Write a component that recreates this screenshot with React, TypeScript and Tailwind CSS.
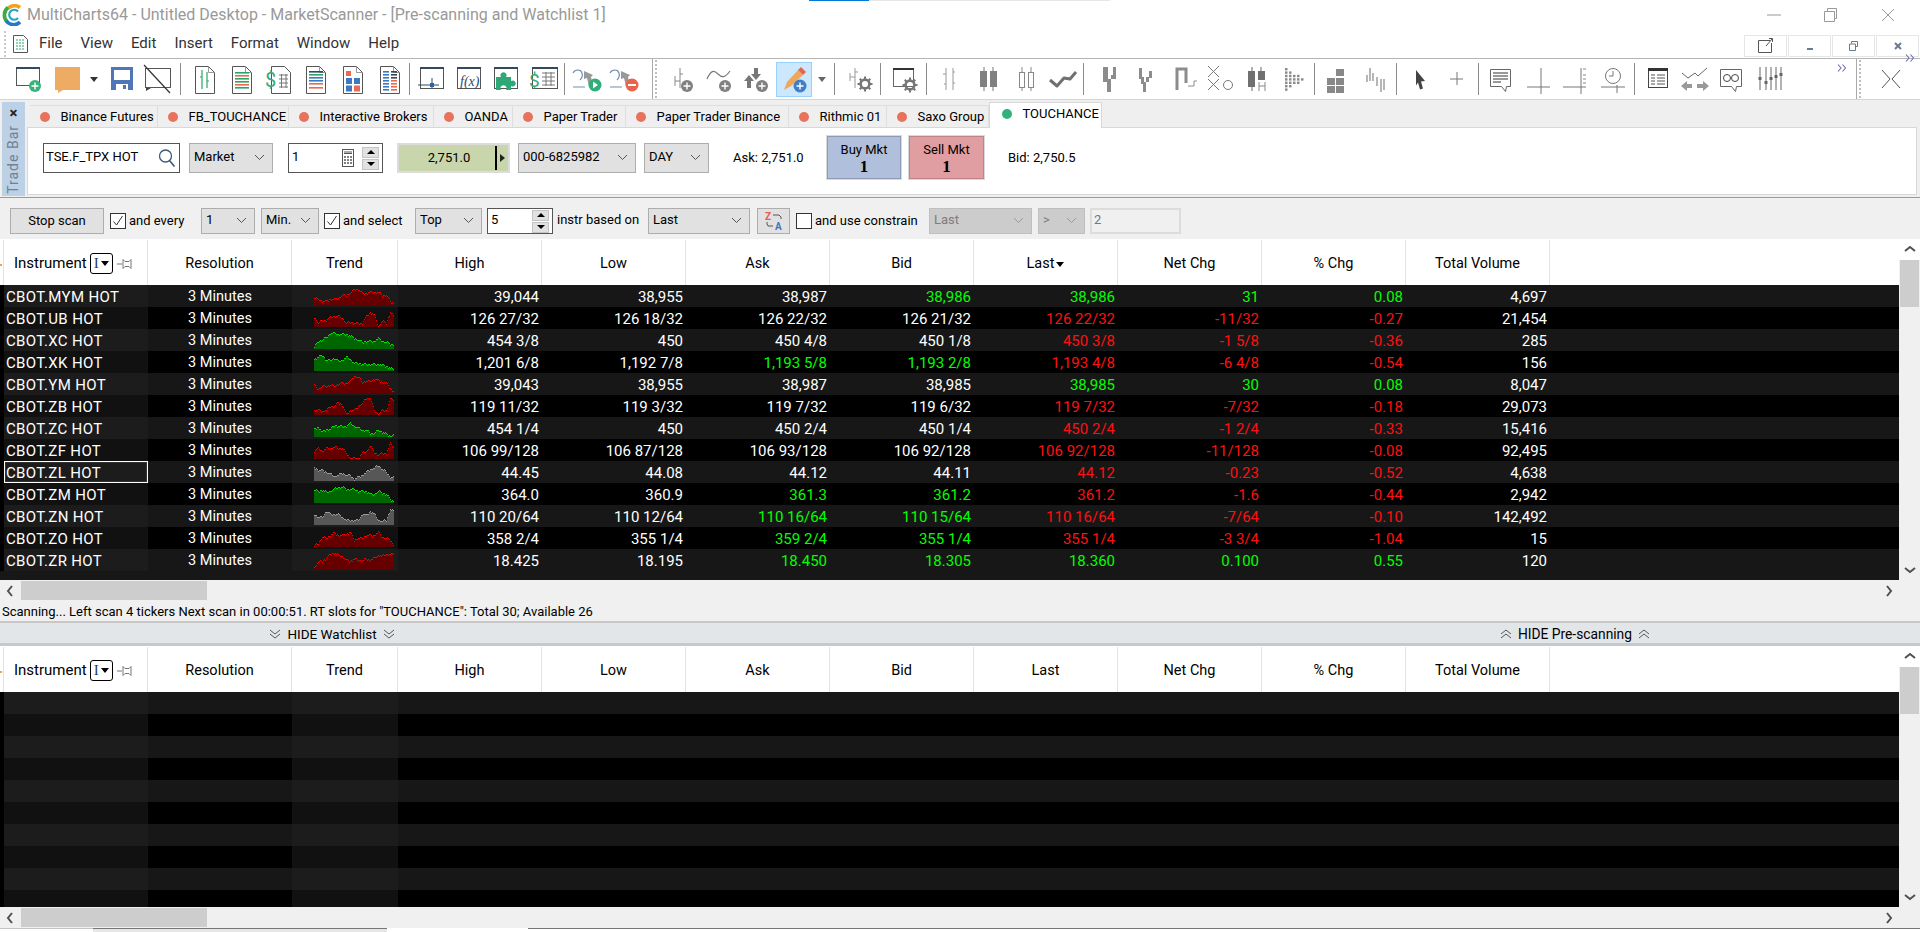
import React from 'react';

type Tone = 'w' | 'g' | 'r';
type Cell = [string, Tone];

const W: Tone = 'w';
const G: Tone = 'g';
const R: Tone = 'r';

const toneClass: Record<Tone, string> = {
  w: 'text-white',
  g: 'text-[#00ff00]',
  r: 'text-[#ff1010]',
};

// name, high, low, ask, bid, last, net, pct, volume, spark colour, spark heights
const ROWS: { name: string; high: string; low: string; cells: Cell[]; vol: string; spark: 'red' | 'green' | 'gray'; h: number[] }[] = [
  { name: 'CBOT.MYM HOT', high: '39,044', low: '38,955', cells: [['38,987', W], ['38,986', G], ['38,986', G], ['31', G], ['0.08', G]], vol: '4,697', spark: 'red', h: [7, 6, 4, 4, 6, 6, 7, 10, 10, 12, 16, 16, 12, 12, 13, 13, 13, 10, 10, 4, 1] },
  { name: 'CBOT.UB HOT', high: '126 27/32', low: '126 18/32', cells: [['126 22/32', W], ['126 21/32', W], ['126 22/32', R], ['-11/32', R], ['-0.27', R]], vol: '21,454', spark: 'red', h: [10, 4, 7, 7, 10, 11, 11, 9, 4, 5, 4, 4, 4, 11, 15, 12, 1, 6, 4, 15, 10] },
  { name: 'CBOT.XC HOT', high: '454 3/8', low: '450', cells: [['450 4/8', W], ['450 1/8', W], ['450 3/8', R], ['-1 5/8', R], ['-0.36', R]], vol: '285', spark: 'green', h: [2, 8, 9, 12, 16, 16, 15, 15, 15, 13, 11, 9, 7, 8, 8, 8, 11, 8, 7, 5, 5] },
  { name: 'CBOT.XK HOT', high: '1,201 6/8', low: '1,192 7/8', cells: [['1,193 5/8', G], ['1,193 2/8', G], ['1,193 4/8', R], ['-6 4/8', R], ['-0.54', R]], vol: '156', spark: 'green', h: [12, 14, 16, 11, 11, 13, 10, 11, 14, 12, 8, 8, 7, 7, 7, 7, 7, 6, 5, 3, 1] },
  { name: 'CBOT.YM HOT', high: '39,043', low: '38,955', cells: [['38,987', W], ['38,985', W], ['38,985', G], ['30', G], ['0.08', G]], vol: '8,047', spark: 'red', h: [8, 4, 7, 7, 8, 7, 9, 10, 10, 12, 17, 16, 11, 12, 12, 14, 13, 11, 10, 5, 1] },
  { name: 'CBOT.ZB HOT', high: '119 11/32', low: '119 3/32', cells: [['119 7/32', W], ['119 6/32', W], ['119 7/32', R], ['-7/32', R], ['-0.18', R]], vol: '29,073', spark: 'red', h: [5, 5, 4, 5, 9, 9, 13, 10, 1, 5, 5, 9, 12, 17, 17, 5, 1, 5, 5, 17, 15] },
  { name: 'CBOT.ZC HOT', high: '454 1/4', low: '450', cells: [['450 2/4', W], ['450 1/4', W], ['450 2/4', R], ['-1 2/4', R], ['-0.33', R]], vol: '15,416', spark: 'green', h: [8, 10, 5, 8, 8, 12, 11, 11, 11, 14, 11, 9, 7, 7, 4, 4, 7, 5, 3, 1, 3] },
  { name: 'CBOT.ZF HOT', high: '106 99/128', low: '106 87/128', cells: [['106 93/128', W], ['106 92/128', W], ['106 92/128', R], ['-11/128', R], ['-0.08', R]], vol: '92,495', spark: 'red', h: [8, 11, 8, 11, 11, 12, 11, 11, 6, 1, 1, 1, 6, 8, 13, 7, 4, 6, 6, 16, 11] },
  { name: 'CBOT.ZL HOT', high: '44.45', low: '44.08', cells: [['44.12', W], ['44.11', W], ['44.12', R], ['-0.23', R], ['-0.52', R]], vol: '4,638', spark: 'gray', h: [14, 11, 11, 9, 7, 5, 6, 8, 6, 6, 2, 4, 6, 9, 12, 13, 16, 12, 9, 4, 4] },
  { name: 'CBOT.ZM HOT', high: '364.0', low: '360.9', cells: [['361.3', G], ['361.2', G], ['361.2', R], ['-1.6', R], ['-0.44', R]], vol: '2,942', spark: 'green', h: [13, 12, 13, 11, 12, 14, 16, 16, 14, 14, 14, 12, 12, 12, 9, 9, 12, 10, 9, 4, 1] },
  { name: 'CBOT.ZN HOT', high: '110 20/64', low: '110 12/64', cells: [['110 16/64', G], ['110 15/64', G], ['110 16/64', R], ['-7/64', R], ['-0.10', R]], vol: '142,492', spark: 'gray', h: [11, 8, 8, 14, 11, 11, 11, 8, 5, 5, 5, 5, 11, 10, 14, 11, 5, 4, 5, 16, 13] },
  { name: 'CBOT.ZO HOT', high: '358 2/4', low: '355 1/4', cells: [['359 2/4', G], ['355 1/4', G], ['355 1/4', R], ['-3 3/4', R], ['-1.04', R]], vol: '15', spark: 'red', h: [1, 4, 10, 9, 12, 14, 12, 12, 13, 15, 7, 9, 9, 12, 12, 12, 15, 10, 9, 7, 1] },
  { name: 'CBOT.ZR HOT', high: '18.425', low: '18.195', cells: [['18.450', G], ['18.305', G], ['18.360', G], ['0.100', G], ['0.55', G]], vol: '120', spark: 'red', h: [2, 7, 8, 11, 15, 16, 14, 13, 9, 8, 10, 9, 9, 10, 9, 11, 14, 13, 15, 15, 15] },
];

const sparkColors = {
  red: { fill: '#660000', top: '#f00000' },
  green: { fill: '#006600', top: '#00e000' },
  gray: { fill: '#575757', top: '#9a9a9a' },
};

function Spark({ kind, h, seed }: { kind: 'red' | 'green' | 'gray'; h: number[]; seed: number }) {
  const c = sparkColors[kind];
  const fills: React.ReactNode[] = [];
  for (let x = 0; x < 80; x++) {
    const a = x / 4;
    const i = Math.min(Math.floor(a), 19);
    const base = h[i] + (h[i + 1] - h[i]) * (a - i);
    const wob = [0, 1, 0, 0, -1, 0, 1, -1, 0][(x * 5 + seed * 7) % 9];
    const v = Math.max(1, Math.min(17, Math.round(base + wob)));
    fills.push(<rect key={x} x={x} y={18 - v} width={1} height={v} fill={c.fill} />);
    fills.push(<rect key={'t' + x} x={x} y={18 - v} width={1} height={1} fill={c.top} />);
  }
  return (
    <svg width={80} height={18} viewBox="0 0 80 18" shapeRendering="crispEdges" className="block">
      {fills}
    </svg>
  );
}

function Badge({ cx, cy, c, r = 6 }: { cx: number; cy: number; c: string; r?: number }) {
  return (
    <g>
      <circle cx={cx} cy={cy} r={r} fill={c} />
      <path d={`M${cx - 3.5} ${cy}h7M${cx} ${cy - 3.5}v7`} stroke="#fff" strokeWidth={1.4} />
    </g>
  );
}

function Gear({ cx, cy, c = '#777' }: { cx: number; cy: number; c?: string }) {
  return (
    <g>
      <circle cx={cx} cy={cy} r={4.4} fill="none" stroke={c} strokeWidth={2.6} />
      <path d={`M${cx} ${cy - 7.5}v3M${cx} ${cy + 4.5}v3M${cx - 7.5} ${cy}h3M${cx + 4.5} ${cy}h3M${cx - 5.3} ${cy - 5.3}l2 2M${cx + 3.3} ${cy + 3.3}l2 2M${cx + 5.3} ${cy - 5.3}l-2 2M${cx - 3.3} ${cy + 3.3}l-2 2`} stroke={c} strokeWidth={2} />
    </g>
  );
}

function Ico({ children }: { children: React.ReactNode }) {
  return (
    <svg width={34} height={32} viewBox="0 0 34 32" fill="none">
      {children}
    </svg>
  );
}

function Doc({ children }: { children: React.ReactNode }) {
  return (
    <Ico>
      <path d="M7.5 3.5h13l6 6v21h-19z" fill="#fff" stroke="#555" />
      <path d="M20.5 3.5v6h6" stroke="#999" />
      {children}
    </Ico>
  );
}

function Win({ children }: { children: React.ReactNode }) {
  return (
    <Ico>
      <rect x={5.5} y={4.5} width={23} height={21} fill="#fff" stroke="#555" />
      <rect x={5} y={4} width={24} height={2} fill="#34495e" />
      {children}
    </Ico>
  );
}

const bars = (rows: [number, string, number][]) =>
  rows.map(([y, c, w], i) => <rect key={i} x={10} y={y} width={w} height={1.6} fill={c} />);

const TOOL_ICONS: Record<string, React.ReactNode> = {
  newWin: (
    <Ico>
      <rect x={5.5} y={4.5} width={23} height={18} fill="#fff" stroke="#555" />
      <rect x={5} y={4} width={24} height={2} fill="#34495e" />
      <Badge cx={24} cy={23} c="#38b27a" />
    </Ico>
  ),
  note: (
    <Ico>
      <path d="M5 4h25v23H13l-5 3v-3H5z" fill="#edab63" />
    </Ico>
  ),
  save: (
    <Ico>
      <rect x={6} y={4} width={22} height={23} fill="#4f76b6" />
      <rect x={9} y={7} width={16} height={10} fill="#fff" />
      <rect x={11} y={21} width={12} height={6} fill="#fff" />
      <rect x={18} y={22} width={3} height={4} fill="#4f76b6" />
    </Ico>
  ),
  noChart: (
    <Ico>
      <rect x={4.5} y={5.5} width={25} height={19} fill="#fff" stroke="#555" />
      <path d="M5 25h5l-5 3z" fill="#444" />
      <path d="M3 2l26 28" stroke="#333" strokeWidth={1.2} />
    </Ico>
  ),
  docChart: (
    <Doc>
      <path d="M14 7v19M19 9v16M12 14h2M19 18h2" stroke="#2aa56a" strokeWidth={1.2} />
    </Doc>
  ),
  docBars: (
    <Doc>
      {[9, 12, 15, 18, 21, 24].map((y, i) => (
        <rect key={y} x={10} y={y} width={14} height={1.6} fill={i % 3 === 1 ? '#e86a50' : '#2aa56a'} />
      ))}
    </Doc>
  ),
  docDollar: (
    <Ico>
      <path d="M9.5 3.5h13l6 6v21h-19z" fill="#fff" stroke="#555" />
      <text x={3} y={24} fontSize={20} fontFamily="Roboto, sans-serif" fill="#35ab7a">$</text>
      <path d="M17 12h9M17 16h9M17 20h9M17 24h9M19.5 11v14M24 11v14" stroke="#777" />
    </Ico>
  ),
  docLines: (
    <Doc>
      {bars([[8, '#34495e', 14], [11, '#2aa56a', 14], [14, '#3b79c4', 14], [17, '#3b79c4', 14], [20, '#e86a50', 14], [24, '#e86a50', 14]])}
    </Doc>
  ),
  docSquares: (
    <Doc>
      <rect x={10} y={8} width={5} height={5} fill="#e86a50" />
      <rect x={10} y={15} width={6} height={6} fill="#3b79c4" />
      <rect x={18} y={15} width={6} height={6} fill="#3b79c4" />
      <rect x={10} y={22.5} width={6} height={6} fill="#3b79c4" />
      <rect x={18} y={22.5} width={6} height={6} fill="#e86a50" />
    </Doc>
  ),
  docCols: (
    <Doc>
      {[8, 11, 14, 17, 20, 23, 26].map((y) => (
        <g key={y}>
          <rect x={10} y={y} width={6} height={1.6} fill="#3b79c4" />
          <rect x={18} y={y} width={6} height={1.6} fill={y > 14 ? '#e86a50' : '#34495e'} />
        </g>
      ))}
    </Doc>
  ),
  winCross: (
    <Win>
      <path d="M3 22h21M17 15v11" stroke="#34495e" />
      <rect x={15} y={20} width={4} height={4} fill="#2b62a8" />
    </Win>
  ),
  winFx: (
    <Win>
      <text x={8} y={23} fontSize={14} fontStyle="italic" fontFamily="'Liberation Serif', serif" fill="#2b4a6e">f(x)</text>
    </Win>
  ),
  winPuzzle: (
    <Ico>
      <rect x={5.5} y={4.5} width={23} height={21} fill="#fff" stroke="#555" />
      <rect x={5} y={4} width={24} height={2} fill="#34495e" />
      <path d="M7 14h5a3 3 0 1 1 5 0h5v4a3 3 0 1 1 0 5v4h-5a3 3 0 1 0-5 0H7z" fill="#2fa877" />
    </Ico>
  ),
  winDollar: (
    <Ico>
      <rect x={6.5} y={4.5} width={25} height={21} fill="#fff" stroke="#555" />
      <rect x={6} y={4} width={26} height={2} fill="#34495e" />
      <text x={3} y={24} fontSize={19} fontFamily="Roboto, sans-serif" fill="#35ab7a">$</text>
      <path d="M16 10h13M16 14h13M16 18h13M16 22h13M20 9v14M25 9v14" stroke="#777" />
    </Ico>
  ),
  runGo: (
    <Ico>
      <path d="M3 10c2-4 8-4 9 0 1 3-1 6-2 7M3 24h12" stroke="#6f8fb0" strokeWidth={1.2} />
      <path d="M14 8l9 4-2 2 2 8-4 1-2-8-3 1z" fill="#999" />
      <circle cx={25} cy={22} r={6.5} fill="#2fae77" />
      <path d="M23 18.5v7l5-3.5z" fill="#fff" />
    </Ico>
  ),
  runStop: (
    <Ico>
      <path d="M3 10c2-4 8-4 9 0 1 3-1 6-2 7M3 24h12" stroke="#6f8fb0" strokeWidth={1.2} />
      <path d="M14 8l9 4-2 2 2 8-4 1-2-8-3 1z" fill="#999" />
      <circle cx={25} cy={22} r={6.5} fill="#e8654c" />
      <path d="M21 22h8" stroke="#fff" strokeWidth={2} />
    </Ico>
  ),
  addBar: (
    <Ico>
      <path d="M13 5v20M8 13v10M8 18h5M13 11h3" stroke="#888" />
      <Badge cx={20} cy={23} c="#808080" />
    </Ico>
  ),
  addLine: (
    <Ico>
      <path d="M3 16c4-9 7-9 11-5s7 4 12-3" stroke="#777" strokeWidth={1.2} />
      <Badge cx={21} cy={23} c="#808080" />
    </Ico>
  ),
  addArrows: (
    <Ico>
      <path d="M14 5h4v6h3l-5 6-5-6h3zM9 12l5 6h-3v7H7v-7H4z" fill="#777" />
      <Badge cx={22} cy={23} c="#808080" />
    </Ico>
  ),
  addPencil: (
    <Ico>
      <path d="M7 27l3-8 11-12 5 5-12 11z" fill="#eca95b" />
      <path d="M21 7l3-3 5 5-3 3z" fill="#e8654c" />
      <Badge cx={23} cy={23} c="#3f7fc6" r={6.5} />
    </Ico>
  ),
  barsGear: (
    <Ico>
      <path d="M10 5v20M5 10v8M5 14h5M10 9h3" stroke="#999" />
      <Gear cx={20} cy={21} />
    </Ico>
  ),
  winGear: (
    <Ico>
      <rect x={5.5} y={5.5} width={20} height={18} fill="#fff" stroke="#666" />
      <rect x={5} y={5} width={21} height={2} fill="#333" />
      <Gear cx={22} cy={22} />
    </Ico>
  ),
  ohlc: (
    <Ico>
      <path d="M13 5v22M20 5v22M10 11h3M13 21h-2M20 9h2M20 20h2" stroke="#999" />
    </Ico>
  ),
  candle: (
    <Ico>
      <path d="M12 4v24M21 4v24" stroke="#777" />
      <rect x={8} y={8} width={7} height={16} fill="#808080" />
      <rect x={18} y={8} width={7} height={16} fill="#808080" />
    </Ico>
  ),
  hollow: (
    <Ico>
      <path d="M12 4v24M21 4v24" stroke="#888" />
      <rect x={9.5} y={9.5} width={5} height={15} fill="#fff" stroke="#888" />
      <rect x={18.5} y={9.5} width={5} height={15} fill="#fff" stroke="#888" />
    </Ico>
  ),
  lineChk: (
    <Ico>
      <path d="M4 17l7 6 7-8 6 1 6-7" stroke="#707070" strokeWidth={3} strokeLinejoin="round" />
    </Ico>
  ),
  kagi: (
    <Ico>
      <path d="M11 4h5v12h3v13h-4V19h-4zM21 4h3v12h-5v-4h2z" fill="#8c8c8c" />
    </Ico>
  ),
  kagiThin: (
    <Ico>
      <path d="M11 5h3v9h2v5h2v10h-3V21h-2v-5h-2zM21 8h3v7h-3v4h-3v-5h3z" fill="#8c8c8c" />
    </Ico>
  ),
  renko: (
    <Ico>
      <path d="M10 27V6h9v14" stroke="#8c8c8c" strokeWidth={3} />
      <path d="M21 23h6v-5h3" stroke="#8c8c8c" />
    </Ico>
  ),
  pf: (
    <Ico>
      <path d="M5 3l11 11M16 3L5 14M5 16l11 11M16 16L5 27" stroke="#777" />
      <circle cx={25} cy={22} r={4.5} stroke="#777" />
    </Ico>
  ),
  candleH: (
    <Ico>
      <path d="M12 4v24M21 4v8" stroke="#666" />
      <rect x={8} y={8} width={7} height={16} fill="#707070" />
      <rect x={18} y={8} width={7} height={9} fill="#707070" />
      <path d="M19 19v9M25 19v9M19 23h6" stroke="#888" />
    </Ico>
  ),
  dots: (
    <Ico>
      {[0, 1, 2, 3, 4].map((c) =>
        [0, 1, 2, 3, 4, 5, 6].map((r) =>
          Math.abs(r - 3) <= 3 - c / 1.6 ? <rect key={`${c}${r}`} x={8 + c * 4} y={5 + r * 3.4} width={2.5} height={2.4} fill="#8a8a8a" /> : null,
        ),
      )}
    </Ico>
  ),
  blocks: (
    <Ico>
      <rect x={16} y={6} width={8} height={7} fill="#888" />
      <rect x={7} y={15} width={8} height={7} fill="#888" />
      <rect x={16} y={15} width={8} height={7} fill="#888" />
      <rect x={7} y={23} width={8} height={7} fill="#888" />
      <rect x={16} y={23} width={8} height={7} fill="#888" />
    </Ico>
  ),
  steps: (
    <Ico>
      <path d="M9 12v7M12 5v13M15 10v8M19 14v9M23 16v13M26 16v11" stroke="#999" strokeWidth={1.4} />
    </Ico>
  ),
  arrow: (
    <Ico>
      <path d="M13 7l9 11-4 .5 2 7-3 1-2-7-2 3z" fill="#444" />
    </Ico>
  ),
  cross: (
    <Ico>
      <path d="M17 9v13M10 16h13" stroke="#777" />
    </Ico>
  ),
  talk: (
    <Ico>
      <path d="M6.5 6.5h20v17h-4l-1 5-4-5h-11z" fill="#fff" stroke="#666" />
      <path d="M9 10h15M9 13h15M9 16h15M9 19h8" stroke="#333" />
    </Ico>
  ),
  hLine: (
    <Ico>
      <path d="M5 24h23M19 5v26" stroke="#777" />
    </Ico>
  ),
  hScale: (
    <Ico>
      <path d="M5 24h23M23 5v26" stroke="#777" />
      <path d="M25 6h3M25 12h3M25 16h3M25 20h3" stroke="#888" />
    </Ico>
  ),
  clock: (
    <Ico>
      <circle cx={17} cy={13} r={7.5} stroke="#777" />
      <path d="M17 8v5h-4M5 24h24M21 22v8" stroke="#777" />
    </Ico>
  ),
  table: (
    <Ico>
      <rect x={7.5} y={6.5} width={19} height={18} fill="#fff" stroke="#444" />
      <rect x={7} y={5} width={20} height={3} fill="#333" />
      <path d="M10 12h4M16 12h8M10 15h4M16 15h8M10 18h4M16 18h8M10 21h4M16 21h8" stroke="#555" />
    </Ico>
  ),
  swap: (
    <Ico>
      <path d="M4 10l6 5 7-5 3 3 9-8" stroke="#666" />
      <path d="M3 23l6-5v3h5v4H9v3zM31 23l-6-5v3h-6v4h6v3z" fill="#999" />
    </Ico>
  ),
  glasses: (
    <Ico>
      <path d="M6.5 6.5h21v17h-5l-1 5-4-5h-11z" fill="#fff" stroke="#666" />
      <circle cx={13} cy={15} r={3.5} stroke="#444" />
      <circle cx={21} cy={15} r={3.5} stroke="#444" />
    </Ico>
  ),
  sliders: (
    <Ico>
      {[7, 13, 18, 23, 28].map((x, i) => (
        <g key={x}>
          <path d={`M${x} 4v23`} stroke="#666" />
          <rect x={x - 1.5} y={[14, 18, 14, 12, 10][i]} width={3} height={3} fill="#666" />
        </g>
      ))}
    </Ico>
  ),
};

function Tool({ icon, className = '' }: { icon: string; className?: string }) {
  return <div className={`w-[36px] h-[41px] flex items-center justify-center shrink-0 ${className}`}>{TOOL_ICONS[icon]}</div>;
}

function Sep({ className = '' }: { className?: string }) {
  return <div className={`w-px h-[32px] bg-[#8c8c8c] shrink-0 ${className}`} />;
}

function DropTri({ className = '' }: { className?: string }) {
  return <div className={`w-0 h-0 border-l-[4.5px] border-r-[4.5px] border-t-[5px] border-l-transparent border-r-transparent border-t-[#333] ${className}`} />;
}

function Grip() {
  return <div className="h-[38px] border-l-2 border-dotted border-[#bdbdbd] shrink-0" />;
}

function Chev({ dir, className = '' }: { dir: 'up' | 'down' | 'left' | 'right'; className?: string }) {
  const d = { up: 'M2 8l5-4 5 4', down: 'M2 5l5 4 5-4', left: 'M8 2L4 7l4 5', right: 'M5 2l4 5-4 5' }[dir];
  return (
    <svg width={14} height={14} viewBox="0 0 14 14" fill="none" className={className}>
      <path d={d} stroke="#505050" strokeWidth={2} />
    </svg>
  );
}

function SmallV({ stroke = '#555' }: { stroke?: string }) {
  return (
    <svg width={11} height={7} viewBox="0 0 11 7" fill="none">
      <path d="M1 1l4.5 4.5L10 1" stroke={stroke} />
    </svg>
  );
}

function DblChev({ up }: { up?: boolean }) {
  return (
    <svg width={12} height={10} viewBox="0 0 12 10" fill="none" className={up ? '' : 'rotate-180'}>
      <path d="M1 5l5-4 5 4M1 9l5-4 5 4" stroke="#555" />
    </svg>
  );
}

function More({ className = '' }: { className?: string }) {
  return (
    <svg width={10} height={8} viewBox="0 0 10 8" fill="none" className={className}>
      <path d="M1 .5L4 4 1 7.500M5.500 .5l3 3.500-3 3.500" stroke="#6d6db0" strokeWidth={1.1} />
    </svg>
  );
}

function Sel({ text, className, disabled }: { text: string; className: string; disabled?: boolean }) {
  return (
    <div className={`flex items-center justify-between pl-[4px] pr-[7px] pb-[2px] border shrink-0 ${disabled ? 'bg-[#cccccc] border-[#bfbfbf] text-[#7d7d7d]' : 'bg-[#e1e1e1] border-[#adadad] text-black'} ${className}`}>
      <span>{text}</span>
      <SmallV stroke={disabled ? '#999' : '#555'} />
    </div>
  );
}

function Spinner({ text, className, calc }: { text: string; className: string; calc?: boolean }) {
  return (
    <div className={`flex items-center bg-white border border-[#555] pl-[3px] pr-[3px] shrink-0 ${className}`}>
      <span className="flex-1 pb-[2px]">{text}</span>
      {calc && (
        <svg width={12} height={18} viewBox="0 0 12 18" fill="none" className="mr-[8px]">
          <rect x={0.5} y={0.5} width={11} height={17} stroke="#555" />
          <path d="M2 3h8M2 4.5h8" stroke="#555" />
          <path d="M2 8h2M5 8h2M8 8h2M2 11h2M5 11h2M8 11h2M2 14h2M5 14h2M8 14h2" stroke="#555" strokeWidth={1.5} />
        </svg>
      )}
      <div className="flex flex-col gap-[1px] w-[17px] shrink-0">
        <div className="h-[11px] bg-[#e1e1e1] border border-[#c4c4c4] flex items-center justify-center">
          <div className="w-0 h-0 border-l-[4px] border-r-[4px] border-b-[4px] border-l-transparent border-r-transparent border-b-black" />
        </div>
        <div className="h-[11px] bg-[#e1e1e1] border border-[#c4c4c4] flex items-center justify-center">
          <div className="w-0 h-0 border-l-[4px] border-r-[4px] border-t-[4px] border-l-transparent border-r-transparent border-t-black" />
        </div>
      </div>
    </div>
  );
}

function Check({ on }: { on?: boolean }) {
  return (
    <div className="w-[16px] h-[16px] bg-white border border-[#333] flex items-center justify-center shrink-0">
      {on && (
        <svg width={12} height={12} viewBox="0 0 12 12" fill="none">
          <path d="M1.5 6.5l3 3.5 6-9" stroke="#333" />
        </svg>
      )}
    </div>
  );
}

const TABS = [
  { name: 'Binance Futures', w: 'w-[128px]' },
  { name: 'FB_TOUCHANCE', w: 'w-[131px]' },
  { name: 'Interactive Brokers', w: 'w-[145px]' },
  { name: 'OANDA', w: 'w-[79px]' },
  { name: 'Paper Trader', w: 'w-[113px]' },
  { name: 'Paper Trader Binance', w: 'w-[163px]' },
  { name: 'Rithmic 01', w: 'w-[98px]' },
  { name: 'Saxo Group', w: 'w-[102px]' },
];

function HeaderRow({ sorted }: { sorted?: boolean }) {
  const cols = ['Resolution', 'Trend', 'High', 'Low', 'Ask', 'Bid', 'Last', 'Net Chg', '% Chg', 'Total Volume'];
  return (
    <div className="flex h-[46px] bg-white text-black text-[14.5px] shrink-0">
      <div className="w-[4px] border-r border-[#e3e3e3] mt-[1px] flex items-center">
        <div className="w-[2px] h-[2px] bg-[#f0a050] mt-[5px]" />
      </div>
      <div className="w-[144px] border-r border-[#e3e3e3] flex items-center pl-[10px] mt-[1px] pt-[2px] text-[15px]">
        <span>Instrument</span>
        <span className="ml-[3px] w-[23px] h-[21px] border border-black rounded-[3px] flex items-center justify-center gap-[2px] text-[#1a3a6a] font-['Liberation_Serif',serif]">
          I<DropTri className="border-t-black" />
        </span>
        <svg width={18} height={12} viewBox="0 0 18 12" fill="none" className="ml-[4px]">
          <path d="M0 6h5M6 1.5l2 2h4l2-2v9l-2-2H8l-2 2z" stroke="#777" />
        </svg>
      </div>
      {cols.map((c) => (
        <div key={c} className={`${c === 'Trend' ? 'w-[106px]' : 'w-[144px]'} border-r border-[#e3e3e3] flex items-center justify-center gap-[2px] mt-[1px] pt-[2px]`}>
          {c}
          {sorted && c === 'Last' && <DropTri className="border-t-black mt-[2px]" />}
        </div>
      ))}
    </div>
  );
}

function Gutter() {
  return <div className="w-[4px] shrink-0 bg-black" />;
}

function DataRow({ i }: { i: number }) {
  const r = ROWS[i];
  const odd = i % 2 === 1;
  const hi = odd ? 'bg-[#111111]' : 'bg-[#1c1c1c]';
  const selected = r.name === 'CBOT.ZL HOT';
  return (
    <div className={`flex h-[22px] text-[15px] leading-[24px] text-white shrink-0 ${odd ? 'bg-black' : 'bg-[#171717]'}`}>
      <Gutter />
      <div className={`w-[144px] h-[22px] pl-[2px] tracking-[0.35px] ${hi} ${selected ? 'shadow-[inset_0_0_0_1px_#ffffff,inset_0_0_0_2px_#333333]' : ''}`}>{r.name}</div>
      <div className="w-[144px] text-center text-[14.5px]">3 Minutes</div>
      <div className={`w-[106px] h-[22px] pl-[22px] pt-[2px] ${hi}`}>
        <Spark kind={r.spark} h={r.h} seed={i} />
      </div>
      <div className="w-[144px] text-right pr-[3px]">{r.high}</div>
      <div className="w-[144px] text-right pr-[3px]">{r.low}</div>
      {r.cells.map(([t, tone], k) => (
        <div key={k} className={`w-[144px] text-right pr-[3px] ${toneClass[tone]}`}>{t}</div>
      ))}
      <div className="w-[144px] text-right pr-[3px]">{r.vol}</div>
    </div>
  );
}

function EmptyRow({ i }: { i: number }) {
  const odd = i % 2 === 1;
  return (
    <div className={`flex h-[22px] shrink-0 ${odd ? 'bg-black' : 'bg-[#171717]'}`}>
      <Gutter />
      <div className={`w-[144px] ${odd ? 'bg-[#111111]' : 'bg-[#1c1c1c]'}`} />
      <div className="w-[144px]" />
      <div className={`w-[106px] ${odd ? 'bg-[#111111]' : 'bg-[#1c1c1c]'}`} />
    </div>
  );
}

function VScroll() {
  return (
    <div className="w-[21px] bg-[#f0f0f0] flex flex-col items-center shrink-0">
      <div className="h-[21px] w-full bg-white flex items-center justify-center">
        <Chev dir="up" />
      </div>
      <div className="w-[19px] h-[47px] bg-[#cdcdcd]" />
      <div className="flex-1" />
      <div className="h-[21px] flex items-center justify-center">
        <Chev dir="down" />
      </div>
    </div>
  );
}

function HScroll() {
  return (
    <div className="h-[21px] bg-[#f0f0f0] flex items-center shrink-0">
      <div className="w-[21px] flex justify-center">
        <Chev dir="left" />
      </div>
      <div className="w-[186px] h-[19px] bg-[#cdcdcd]" />
      <div className="flex-1" />
      <div className="w-[21px] flex justify-center mr-[21px]">
        <Chev dir="right" />
      </div>
    </div>
  );
}

function MdiBtn({ children }: { children: React.ReactNode }) {
  return <div className="w-[43px] h-[22px] border border-[#e6e6e6] flex items-center justify-center">{children}</div>;
}

export default function App() {
  return (
    <div className="w-[1920px] h-[932px] overflow-hidden bg-white flex flex-col font-['Roboto',sans-serif]">
      {/* title bar */}
      <div className="h-[29px] flex items-center shrink-0 relative">
        <svg width={22} height={22} viewBox="0 0 22 22" fill="none" className="ml-[2px] mt-[1px]">
          <path d="M6 4.5A9 9 0 0 1 18 3.5" stroke="#f0a020" strokeWidth={3.6} />
          <path d="M6 3.5A9.5 9.5 0 0 0 5 17.5" stroke="#3caa3c" strokeWidth={3.6} />
          <path d="M4 16.5A9 9 0 0 0 18 18" stroke="#2878c8" strokeWidth={3.6} />
          <path d="M16 7.5A5 5 0 1 0 16 14" stroke="#2aa5c0" strokeWidth={2.2} />
        </svg>
        <span className="ml-[3px] text-[16px] text-[#999999] whitespace-nowrap">MultiCharts64 - Untitled Desktop - MarketScanner - [Pre-scanning and Watchlist 1]</span>
        <div className="absolute left-[809px] top-0 w-[60px] h-[1px] bg-[#0078d7]" />
        <div className="absolute left-[869px] top-0 w-[241px] h-[1px] bg-[#e6e6e6]" />
        <div className="ml-auto flex items-center gap-[43px] mr-[25px]">
          <svg width={14} height={2} viewBox="0 0 14 2"><path d="M0 1h14" stroke="#999" /></svg>
          <svg width={14} height={14} viewBox="0 0 14 14" fill="none"><path d="M3.5 3.5v-3h9v10h-2M.5 3.5h10v10H.5z" stroke="#999" /></svg>
          <svg width={14} height={14} viewBox="0 0 14 14" fill="none"><path d="M1 1l12 12M13 1L1 13" stroke="#999" /></svg>
        </div>
      </div>

      {/* menu bar */}
      <div className="h-[29px] flex items-center shrink-0 text-[15px] text-[#333333]">
        <div className="h-[26px] ml-[4px] border-l-2 border-dotted border-[#c8c8c8]" />
        <svg width={15} height={18} viewBox="0 0 15 18" fill="none" className="ml-[7px] mr-[11px]">
          <path d="M.5.5h10l4 4v13H.5z" fill="#fff" stroke="#555" />
          <path d="M3 5h8M3 8h8M3 11h8M3 14h8" stroke="#2aa56a" strokeDasharray="2 1" />
        </svg>
        <div className="flex gap-[18px]">
          {['File', 'View', 'Edit', 'Insert', 'Format', 'Window', 'Help'].map((m) => (
            <span key={m}>{m}</span>
          ))}
        </div>
        <div className="ml-auto flex items-center gap-px mr-[1px] mb-[-4px]">
          <MdiBtn>
            <svg width={16} height={15} viewBox="0 0 16 15" fill="none"><path d="M12 2.5H.5v12h13V5M8 8l6-7M11 .5h3.500V4" stroke="#555" /></svg>
          </MdiBtn>
          <MdiBtn>
            <div className="w-[6px] h-[2px] bg-[#6a7a90] mt-[6px]" />
          </MdiBtn>
          <MdiBtn>
            <svg width={9} height={10} viewBox="0 0 9 10" fill="none"><path d="M2.500 2.500v-2h6v5h-2M.5 3h6v6.500h-6z" stroke="#6a7a90" /></svg>
          </MdiBtn>
          <MdiBtn>
            <svg width={8} height={8} viewBox="0 0 8 8" fill="none"><path d="M1 1l6 6M7 1L1 7" stroke="#6a7a90" strokeWidth={2} /></svg>
          </MdiBtn>
        </div>
      </div>

      {/* toolbar */}
      <div className="h-[42px] border-t border-b border-t-[#b5b5b5] border-b-[#d5d5d5] flex items-center shrink-0">
        <div className="w-[10px] shrink-0" />
        <Tool icon="newWin" />
        <Tool icon="note" className="ml-[3px]" />
        <div className="w-[18px] flex justify-center shrink-0"><DropTri /></div>
        <Tool icon="save" className="ml-[1px]" />
        <Tool icon="noChart" />
        <Sep className="ml-[4px] mr-[6px]" />
        <Tool icon="docChart" className="mr-px" />
        <Tool icon="docBars" className="mr-px" />
        <Tool icon="docDollar" className="mr-px" />
        <Tool icon="docLines" className="mr-px" />
        <Tool icon="docSquares" className="mr-px" />
        <Tool icon="docCols" />
        <Sep className="ml-[1px] mr-[4px]" />
        <Tool icon="winCross" className="mr-px" />
        <Tool icon="winFx" className="mr-px" />
        <Tool icon="winPuzzle" className="mr-px" />
        <Tool icon="winDollar" />
        <Sep className="ml-[3px] mr-[4px]" />
        <Tool icon="runGo" className="mr-px" />
        <Tool icon="runStop" />
        <div className="w-px h-[40px] bg-[#aaaaaa] ml-[10px] shrink-0" />
        <div className="ml-[2px]"><Grip /></div>
        <div className="w-[9px] shrink-0" />
        <Tool icon="addBar" />
        <Tool icon="addLine" className="ml-[1px]" />
        <Tool icon="addArrows" />
        <div className="ml-[1px] w-[36px] h-[35px] bg-[#cce8ff] border border-[#99d1ff] flex items-center justify-center shrink-0">{TOOL_ICONS.addPencil}</div>
        <div className="w-[20px] flex justify-center shrink-0"><DropTri className="border-t-[#666]" /></div>
        <Sep className="ml-[2px] mr-[7px]" />
        <Tool icon="barsGear" className="ml-[2px]" />
        <Sep className="mr-[6px]" />
        <Tool icon="winGear" />
        <Sep className="ml-[3px] mr-[5px]" />
        <Tool icon="ohlc" />
        <Tool icon="candle" className="ml-[3px]" />
        <Tool icon="hollow" className="ml-[2px]" />
        <Tool icon="lineChk" />
        <Sep className="ml-[2px] mr-[5px]" />
        <Tool icon="kagi" className="ml-[2px]" />
        <Tool icon="kagiThin" />
        <Tool icon="renko" className="ml-[3px]" />
        <Tool icon="pf" />
        <Tool icon="candleH" className="ml-[1px]" />
        <Tool icon="dots" className="ml-[1px]" />
        <Sep className="ml-[2px] mr-[4px]" />
        <Tool icon="blocks" className="mr-[2px]" />
        <Tool icon="steps" />
        <Sep className="ml-[3px] mr-[5px]" />
        <Tool icon="arrow" className="mr-px" />
        <Tool icon="cross" />
        <Sep className="ml-[3px] mr-[4px]" />
        <Tool icon="talk" className="mr-[2px]" />
        <Tool icon="hLine" />
        <Tool icon="hScale" className="mr-[2px]" />
        <Tool icon="clock" />
        <Sep className="ml-[3px] mr-[5px]" />
        <Tool icon="table" className="mr-px" />
        <Tool icon="swap" />
        <Tool icon="glasses" className="mr-[3px]" />
        <Tool icon="sliders" />
        <div className="flex-1 self-start flex justify-end pt-[5px] pr-[9px]"><More /></div>
        <div className="w-px h-[40px] bg-[#aaaaaa] shrink-0" />
        <div className="ml-[2px]"><Grip /></div>
        <div className="flex-1 relative flex items-center justify-center">
          <svg width={20} height={20} viewBox="0 0 20 20" fill="none"><path d="M1 1l8 9-8 9M19 1l-8 9 8 9" stroke="#555" /></svg>
          <More className="absolute right-[5px] top-[-15px]" />
        </div>
      </div>

      {/* trade bar */}
      <div className="h-[98px] bg-[#efefef] border-b border-[#9a9a9a] flex shrink-0 pt-[2px] pl-[2px] pr-[3px]">
        <div className="w-[23px] mb-px bg-[#bcd0e6] flex flex-col items-center text-[#73818f] shrink-0 overflow-hidden">
          <span className="text-[15px] leading-[23px] text-[#222] font-bold">×</span>
          <span className="[writing-mode:vertical-rl] rotate-180 text-[14px] tracking-[1px] whitespace-nowrap">Trade Bar</span>
        </div>
        <div className="flex-1 flex flex-col ml-[2px] min-w-0">
          <div className="flex h-[25px] items-end pl-[2.5px] text-[13px] text-black shrink-0">
            {TABS.map((t) => (
              <div key={t.name} className={`${t.w} h-[22px] border-t border-r border-[#dedede] flex items-center pl-[10px] gap-[11px] shrink-0`}>
                <span className="w-[10px] h-[10px] rounded-full bg-[#e8735c] shrink-0" />
                <span className="whitespace-nowrap">{t.name}</span>
              </div>
            ))}
            <div className="w-[113px] h-[26px] bg-white border border-[#d8d8d8] border-b-0 -mb-px relative flex items-center pl-[12px] gap-[11px] pb-[3px] shrink-0">
              <span className="w-[10px] h-[10px] rounded-full bg-[#2fb37a] shrink-0" />
              <span className="whitespace-nowrap">TOUCHANCE</span>
            </div>
          </div>
          <div className="h-[68px] bg-white border border-[#d8d8d8] flex items-start pl-[15px] pt-[15px] text-[13px] text-black">
            <div className="w-[137px] h-[30px] border border-[#555] flex items-center justify-between pl-[2px] pr-[3px] shrink-0">
              <span className="pb-[2px]">TSE.F_TPX HOT</span>
              <svg width={18} height={20} viewBox="0 0 18 20" fill="none"><circle cx={7.500} cy={8} r={6} stroke="#3c5a78" strokeWidth={1.3} /><path d="M11.500 12.500l5 6" stroke="#3c5a78" strokeWidth={1.6} /></svg>
            </div>
            <Sel text="Market" className="w-[84px] h-[30px] ml-[9px]" />
            <Spinner text="1" calc className="w-[95px] h-[30px] ml-[15px]" />
            <div className="w-[113px] h-[30px] ml-[14px] border-2 border-[#dcdcdc] bg-[#c9d6ab] flex items-center shrink-0">
              <span className="flex-1 text-center pl-[12px]">2,751.0</span>
              <div className="w-[2px] h-[24px] bg-black ml-[8px]" />
              <div className="w-0 h-0 ml-[3px] mr-[3px] border-t-[4px] border-b-[4px] border-l-[5px] border-t-transparent border-b-transparent border-l-[#222]" />
            </div>
            <Sel text="000-6825982" className="w-[118px] h-[30px] ml-[8px]" />
            <Sel text="DAY" className="w-[65px] h-[30px] ml-[8px]" />
            <span className="w-[93px] ml-[24px] h-[30px] flex items-center whitespace-nowrap shrink-0">Ask: 2,751.0</span>
            <div className="w-[76px] h-[45px] -mt-[8px] border-2 border-[#d9d9d9] outline outline-1 -outline-offset-2 outline-[#8f9bb5] bg-[#b0bfdc] flex flex-col items-center justify-center shrink-0">
              <span className="leading-[17px]">Buy Mkt</span>
              <span className="leading-[17px] text-[17px] font-bold font-['Liberation_Serif',serif]">1</span>
            </div>
            <div className="w-[77px] h-[45px] -mt-[8px] ml-[6px] border-2 border-[#d9d9d9] outline outline-1 -outline-offset-2 outline-[#c08488] bg-[#e19ea2] flex flex-col items-center justify-center shrink-0">
              <span className="leading-[17px]">Sell Mkt</span>
              <span className="leading-[17px] text-[17px] font-bold font-['Liberation_Serif',serif]">1</span>
            </div>
            <span className="ml-[23px] h-[30px] flex items-center whitespace-nowrap">Bid: 2,750.5</span>
          </div>
        </div>
      </div>

      {/* scan controls */}
      <div className="h-[41px] bg-[#f0f0f0] flex items-start pl-[10px] pt-[10px] text-[13px] text-black shrink-0">
        <div className="w-[94px] h-[26px] bg-[#e1e1e1] border border-[#adadad] flex items-center justify-center pb-[1px] shrink-0">Stop scan</div>
        <div className="ml-[6px] h-[26px] flex items-center shrink-0"><Check on /></div>
        <span className="w-[75px] pl-[3px] h-[26px] flex items-center shrink-0 whitespace-nowrap">and every</span>
        <Sel text="1" className="w-[54px] h-[26px]" />
        <Sel text="Min." className="w-[58px] h-[26px] ml-[6px]" />
        <div className="ml-[5px] h-[26px] flex items-center shrink-0"><Check on /></div>
        <span className="w-[75px] pl-[3px] h-[26px] flex items-center shrink-0 whitespace-nowrap">and select</span>
        <Sel text="Top" className="w-[67px] h-[26px]" />
        <Spinner text="5" className="w-[66px] h-[26px] ml-[5px]" />
        <span className="w-[95px] pl-[4px] h-[24px] flex items-center shrink-0 whitespace-nowrap">instr based on</span>
        <Sel text="Last" className="w-[102px] h-[26px]" />
        <div className="w-[33px] h-[26px] ml-[7px] bg-[#e1e1e1] border border-[#adadad] flex items-center justify-center shrink-0">
          <svg width={20} height={20} viewBox="0 0 20 20" fill="none">
            <text x={1} y={9} fontSize={10} fontWeight={700} fontFamily="Roboto, sans-serif" fill="#e0604c">Z</text>
            <text x={11} y={19} fontSize={10} fontWeight={700} fontFamily="Roboto, sans-serif" fill="#3f78b8">A</text>
            <path d="M9 4h6l2 2v2M9 15H4l-1-2v-2" stroke="#555" />
          </svg>
        </div>
        <div className="ml-[6px] h-[26px] flex items-center shrink-0"><Check /></div>
        <span className="w-[117px] pl-[3px] h-[26px] flex items-center shrink-0 whitespace-nowrap">and use constrain</span>
        <Sel text="Last" disabled className="w-[103px] h-[26px]" />
        <Sel text=">" disabled className="w-[47px] h-[26px] ml-[6px]" />
        <div className="w-[91px] h-[26px] ml-[5px] border-2 border-[#dcdcdc] bg-[#f0f0f0] text-[#777] flex items-center pl-[2px] pb-[2px] shrink-0">2</div>
      </div>

      {/* pre-scanning panel */}
      <div className="h-[341px] flex shrink-0">
        <div className="flex-1 flex flex-col bg-[#171717] min-w-0">
          <HeaderRow sorted />
          {ROWS.map((_, i) => (
            <DataRow key={i} i={i} />
          ))}
        </div>
        <VScroll />
      </div>
      <HScroll />

      {/* status line */}
      <div className="h-[20px] bg-[#f0f0f0] flex items-center pl-[2px] pt-[2px] text-[13px] text-black shrink-0">
        Scanning... Left scan 4 tickers Next scan in 00:00:51. RT slots for "TOUCHANCE": Total 30; Available 26
      </div>

      {/* hide bar */}
      <div className="h-[25px] bg-[#e3e6e8] border-t-2 border-b-[3px] border-[#c8c8c8] flex items-center pt-[2px] text-black shrink-0">
        <div className="w-[664px] flex items-center justify-center gap-[6px] text-[13.500px]">
          <DblChev />
          <span>HIDE Watchlist</span>
          <DblChev />
        </div>
        <div className="flex-1 flex items-center justify-end gap-[6px] pr-[270px] text-[13.800px]">
          <DblChev up />
          <span>HIDE Pre-scanning</span>
          <DblChev up />
        </div>
      </div>

      {/* watchlist panel */}
      <div className="h-[261px] flex shrink-0">
        <div className="flex-1 flex flex-col bg-black overflow-hidden min-w-0">
          <HeaderRow />
          {Array.from({ length: 10 }).map((_, i) => (
            <EmptyRow key={i} i={i} />
          ))}
        </div>
        <VScroll />
      </div>
      <HScroll />

      {/* tabs peeking out at the bottom */}
      <div className="h-[4px] flex shrink-0">
        <div className="w-[93px] border-t border-[#c4c4c4]" />
        <div className="w-[294px] border-t border-[#777] bg-[#e6e6e6]" />
        <div className="w-[141px]" />
        <div className="flex-1 border-t border-[#777]" />
      </div>
    </div>
  );
}
